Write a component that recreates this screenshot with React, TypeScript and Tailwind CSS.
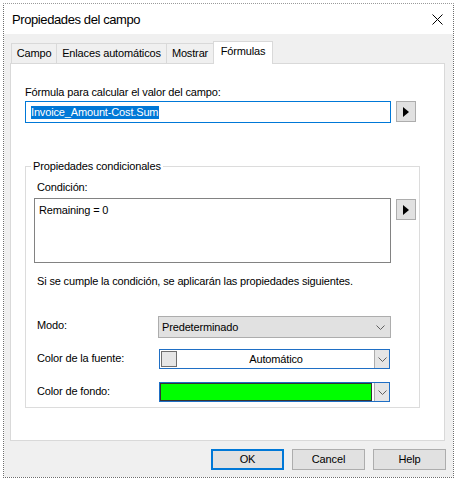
import type { ReactNode } from 'react';

const font = { fontFamily: '"Liberation Sans", Arial, sans-serif' };

function ArrowButton() {
  return (
    <button className="w-[20px] h-[21px] shrink-0 flex items-center justify-center bg-[#e1e1e1] border border-[#adadad]">
      <svg width="6" height="10" viewBox="0 0 6 10">
        <polygon points="0,0 6,5 0,10" fill="#000" />
      </svg>
    </button>
  );
}

function Chevron() {
  return (
    <svg width="9" height="5" viewBox="0 0 9 5">
      <polyline points="0.5,0.5 4.5,4.5 8.5,0.5" fill="none" stroke="#606060" strokeWidth="1" />
    </svg>
  );
}

function DropButton() {
  return (
    <div className="w-[15px] h-full shrink-0 flex items-center justify-center bg-[#e5e5e5] border-l border-[#adadad]">
      <Chevron />
    </div>
  );
}

function Row({ label, children, className }: { label: string; children: ReactNode; className: string }) {
  return (
    <div className={`flex items-start ${className}`}>
      <div className="w-[121px] ml-[3px] leading-[15px] pt-[2px]">{label}</div>
      {children}
    </div>
  );
}

function DialogButton({ label, primary }: { label: string; primary?: boolean }) {
  return (
    <button
      className={`w-[73px] h-[21px] bg-[#e1e1e1] text-[11px] text-black ${
        primary ? 'border-2 border-[#0078d7]' : 'border border-[#adadad]'
      }`}
    >
      {label}
    </button>
  );
}

export default function App() {
  const tabs = [
    { id: 'campo', label: 'Campo', w: 'w-[46px]' },
    { id: 'enlaces', label: 'Enlaces automáticos', w: 'w-[111px]' },
    { id: 'mostrar', label: 'Mostrar', w: 'w-[48px]' },
    { id: 'formulas', label: 'Fórmulas', w: 'w-[60px]' },
  ];
  const active = 'formulas';

  return (
    <div className="w-[455px] h-[480px] bg-white pt-[3px] pl-[3px] text-[11px] tracking-[-0.15px] text-black" style={font}>
      {/* Window frame */}
      <div className="w-[451px] h-[475px] flex flex-col border-l border-r border-b border-[#6e6e6e] border-t border-t-[#9a9a9a] border-dotted">
        {/* Title bar */}
        <div className="h-[30px] bg-white flex items-center pl-[8px] pr-[10px] shrink-0">
          <span className="text-[13px] tracking-[-0.4px] leading-none">Propiedades del campo</span>
          <svg className="ml-auto" width="11" height="11" viewBox="0 0 11 11">
            <path d="M0.5 0.5 L10.5 10.5 M10.5 0.5 L0.5 10.5" stroke="#000" strokeWidth="1" />
          </svg>
        </div>

        {/* Dialog body */}
        <div className="flex-1 bg-[#f0f0f0] pt-[7px] pl-[6px] pr-[7px]">
          {/* Tab strip */}
          <div className="flex items-end h-[22px] pl-[1px]">
            {tabs.map((t, i) => {
              const isActive = t.id === active;
              return (
                <div
                  key={t.id}
                  className={`${t.w} ${i > 0 ? '-ml-px' : ''} whitespace-nowrap flex items-center justify-center border-t border-l border-r border-[#d9d9d9] ${
                    isActive ? 'h-[23px] -mb-px bg-white relative z-10 pb-[3px]' : 'h-[20px] bg-[#f0f0f0]'
                  }`}
                >
                  {t.label}
                </div>
              );
            })}
          </div>

          {/* Tab panel */}
          <div className="w-[435px] h-[378px] bg-white border border-[#d9d9d9] pl-[14px] pt-[21px]">
            <div className="leading-[15px]">Fórmula para calcular el valor del campo:</div>
            <div className="flex items-start gap-[5px] mt-[1px]">
              <div className="w-[366px] h-[22px] border border-[#0078d7] flex items-center pl-[5px]">
                <span className="bg-[#0078d7] text-white leading-[13px] pr-px">Invoice_Amount-Cost.Sum</span>
              </div>
              <ArrowButton />
            </div>

            {/* Conditional properties group */}
            <fieldset className="w-[395px] mt-[36px] border border-[#dcdcdc] pl-[8px] pb-[5px]">
              <legend className="-ml-[3px] px-[2px] leading-[15px]">Propiedades condicionales</legend>
              <div className="ml-[3px] mt-[6px] leading-[15px]">Condición:</div>
              <div className="flex items-start gap-[5px] mt-[3px]">
                <div className="w-[357px] h-[65px] border border-[#828282] pl-[4px] pt-[4px] leading-[15px]">
                  Remaining = 0
                </div>
                <div className="mt-[1px]">
                  <ArrowButton />
                </div>
              </div>
              <div className="ml-[3px] mt-[11px] leading-[15px]">
                Si se cumple la condición, se aplicarán las propiedades siguientes.
              </div>

              <Row label="Modo:" className="mt-[27px]">
                <div className="w-[233px] h-[22px] bg-[#e1e1e1] border border-[#adadad] flex items-center pl-[3px] pr-[5px]">
                  <span>Predeterminado</span>
                  <span className="ml-auto">
                    <Chevron />
                  </span>
                </div>
              </Row>

              <Row label="Color de la fuente:" className="mt-[11px]">
                <div className="w-[231px] h-[20px] ml-px border border-[#1f6fc5] flex items-stretch bg-white">
                  <div className="w-[16px] bg-[#e6e6e6] border border-[#6e6e6e] m-px" />
                  <div className="flex-1 flex items-center justify-center">Automático</div>
                  <DropButton />
                </div>
              </Row>

              <Row label="Color de fondo:" className="mt-[13px]">
                <div className="w-[231px] h-[20px] ml-px border border-[#1f6fc5] flex items-stretch bg-white">
                  <div className="flex-1 bg-[#00ff00] border border-[#333333] mr-[2px]" />
                  <DropButton />
                </div>
              </Row>
            </fieldset>
          </div>

          {/* Dialog buttons */}
          <div className="flex justify-end gap-[8px] mt-[8px]">
            <DialogButton label="OK" primary />
            <DialogButton label="Cancel" />
            <DialogButton label="Help" />
          </div>
        </div>
      </div>
    </div>
  );
}
